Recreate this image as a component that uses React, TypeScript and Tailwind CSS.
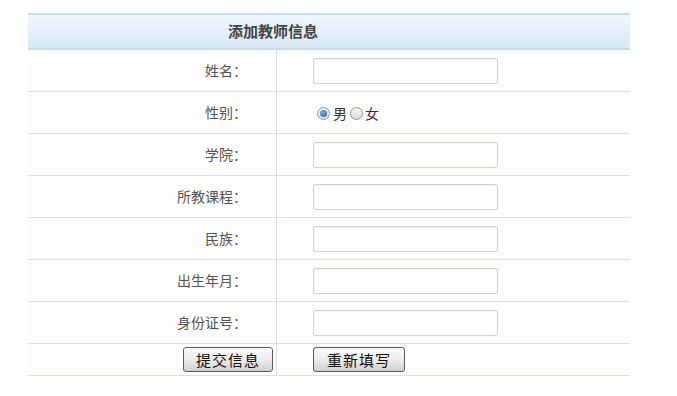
import React from "react";

// 表单字段
const FIELDS = [
  { label: "姓名：", kind: "text" },
  { label: "性别：", kind: "radio" },
  { label: "学院：", kind: "text" },
  { label: "所教课程：", kind: "text" },
  { label: "民族：", kind: "text" },
  { label: "出生年月：", kind: "text" },
  { label: "身份证号：", kind: "text" },
];

function Radio({ checked }: { checked: boolean }) {
  return (
    <span className="inline-flex h-[13px] w-[13px] items-center justify-center rounded-full border border-[#8e9aa3] bg-gradient-to-b from-[#f4f4f4] to-[#d9dcdf]">
      {checked && (
        <span className="h-[7px] w-[7px] rounded-full bg-[radial-gradient(circle_at_35%_35%,#6fb4e6,#1a5f9c)]" />
      )}
    </span>
  );
}

function FormRow({ label, kind }: { label: string; kind: string }) {
  return (
    <div className="grid h-[42px] grid-cols-[248px_1fr] border-b border-[#d5e2e9]">
      <div className="flex items-center justify-end pr-[29px] text-[14px] text-[#555]">
        {label}
      </div>
      <div className="flex items-center border-l border-[#d5e2e9] pl-[36px]">
        {kind === "text" ? (
          <input
            type="text"
            className="h-[26px] w-[185px] rounded-[2px] border border-[#cfd3d6] bg-white shadow-[inset_0_1px_2px_rgba(0,0,0,0.06)] outline-none"
          />
        ) : (
          <div className="flex items-center pt-[2px] text-[14px] text-[#333]">
            <span className="ml-[4px] flex"><Radio checked={true} /></span>
            <span className="ml-[3px]">男</span>
            <span className="ml-[3px] flex"><Radio checked={false} /></span>
            <span className="ml-[2px]">女</span>
          </div>
        )}
      </div>
    </div>
  );
}

function Btn({ text, w }: { text: string; w: string }) {
  return (
    <button
      className={`${w} h-[25px] rounded-[3px] border border-[#5b5b5b] bg-gradient-to-b from-[#fafafa] via-[#ececec] to-[#d2d2d2] text-[15px] leading-none tracking-[1px] text-[#111] shadow-[inset_0_1px_0_#fff]`}
    >
      {text}
    </button>
  );
}

export default function App() {
  return (
    <div
      className="h-[396px] w-[677px] bg-white pl-[28px] pt-[13px]"
      style={{ fontFamily: '"Noto Sans CJK SC", "Noto Sans", sans-serif' }}
    >
      <div className="w-[602px] bg-[#fdfdfb]">
        <div className="flex h-[37px] items-center border-t-2 border-b-2 border-[#c9dce6] bg-gradient-to-b from-[#eef7fd] to-[#d7e9f5] pl-[200px] text-[15px] font-bold text-[#444]">
          添加教师信息
        </div>
        {FIELDS.map((f, i) => (
          <FormRow key={i} label={f.label} kind={f.kind} />
        ))}
        <div className="grid h-[32px] grid-cols-[248px_1fr] border-b border-[#d5e2e9]">
          <div className="flex items-center justify-end pr-[3px]">
            <Btn text="提交信息" w="w-[90px]" />
          </div>
          <div className="flex items-center border-l border-[#d5e2e9] pl-[36px]">
            <Btn text="重新填写" w="w-[92px]" />
          </div>
        </div>
      </div>
    </div>
  );
}
